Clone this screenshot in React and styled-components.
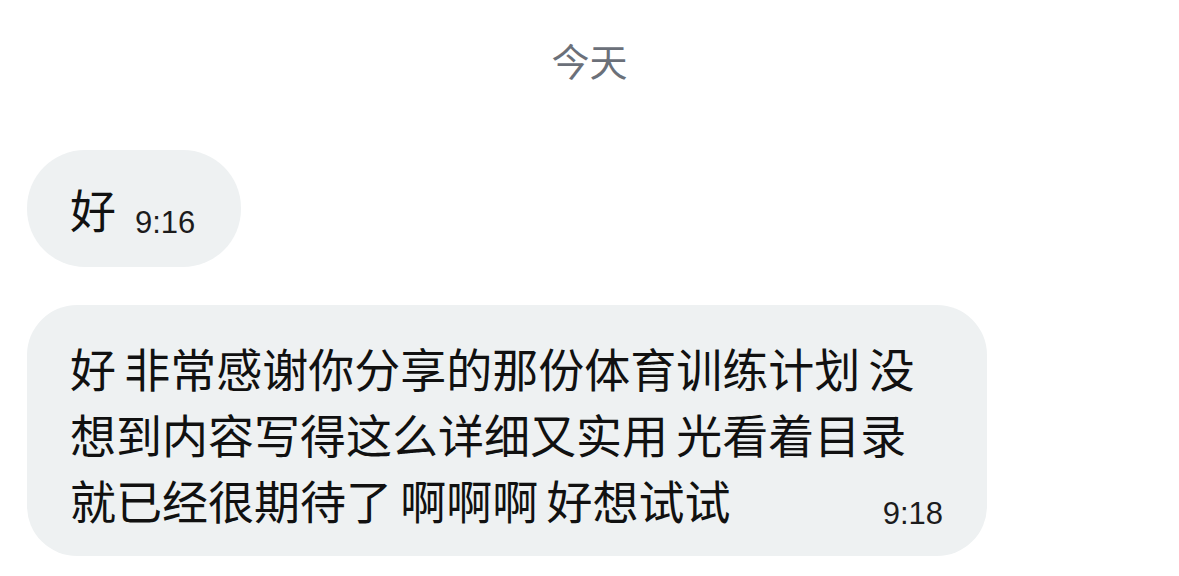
import React from "react";
import styled, { createGlobalStyle } from "styled-components";

const GlobalStyle = createGlobalStyle`
  html, body {
    margin: 0;
    padding: 0;
    background: #ffffff;
  }
  body {
    font-family: "Liberation Sans", "Noto Sans CJK SC", sans-serif;
    -webkit-font-smoothing: antialiased;
  }
`;

const Page = styled.div`
  width: 1179px;
  height: 576px;
  box-sizing: border-box;
  padding: 38px 27px 0;
  display: flex;
  flex-direction: column;
  align-items: flex-start;
  overflow: hidden;
  background: #ffffff;
`;

const DateLabel = styled.div`
  align-self: center;
  font-family: "Noto Sans CJK SC", sans-serif;
  font-size: 38px;
  line-height: 44px;
  color: #6b7079;
  margin-bottom: 68px;
`;

const Bubble = styled.div`
  box-sizing: border-box;
  background: #eef1f2;
  border-radius: ${(p) => (p.$stacked ? "50px" : "58px")};
  padding: ${(p) => (p.$stacked ? "29px 44px 24px 43px" : "25px 46px 26px 43px")};
  width: ${(p) => (p.$stacked ? "960px" : "auto")};
  margin-bottom: 38px;
  display: ${(p) => (p.$stacked ? "block" : "flex")};
  align-items: flex-end;
  font-family: "Noto Sans CJK SC", sans-serif;
  font-size: 46px;
  line-height: 66px;
  color: #111111;
  word-spacing: -2px;
`;

const MessageText = styled.span``;

const Time = styled.span`
  display: inline-block;
  float: ${(p) => (p.$inline ? "none" : "right")};
  margin-top: ${(p) => (p.$inline ? "0" : "30px")};
  margin-left: ${(p) => (p.$inline ? "19px" : "0")};
  font-family: "Liberation Sans", Arial, sans-serif;
  font-size: 31px;
  line-height: 36px;
  word-spacing: 0;
  color: #1c1c1c;
`;

function Message({ text, time, stacked }) {
  return (
    <Bubble $stacked={stacked}>
      <MessageText>{text}</MessageText>
      <Time $inline={!stacked}>{time}</Time>
    </Bubble>
  );
}

export default function App() {
  return (
    <>
      <GlobalStyle />
      <Page>
        <DateLabel>今天</DateLabel>
        <Message text="好" time="9:16" />
        <Message
          stacked
          text="好 非常感谢你分享的那份体育训练计划 没想到内容写得这么详细又实用 光看着目录就已经很期待了 啊啊啊 好想试试"
          time="9:18"
        />
      </Page>
    </>
  );
}
